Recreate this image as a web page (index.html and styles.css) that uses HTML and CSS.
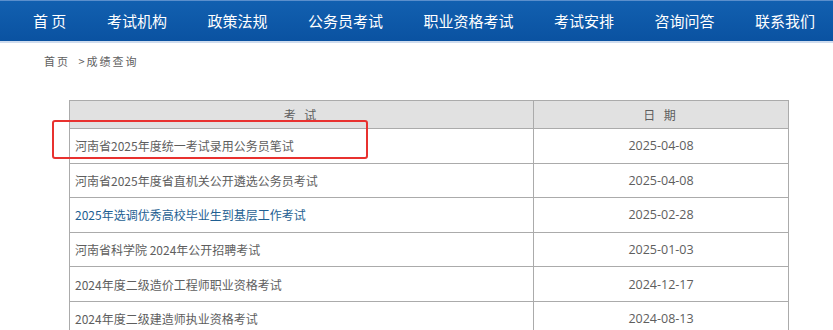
FILE: index.html
```html
<!DOCTYPE html>
<html lang="zh-CN">
<head>
    <meta charset="UTF-8">
    <meta name="viewport" content="width=device-width, initial-scale=1.0">
    <title>成绩查询</title>
    <link rel="stylesheet" href="styles.css">
</head>
<body>
    <div class="nav-bar">
        <ul class="nav-menu">
            <li><a href="#" class="nav-link">首 页</a></li>
            <li><a href="#" class="nav-link">考试机构</a></li>
            <li><a href="#" class="nav-link">政策法规</a></li>
            <li><a href="#" class="nav-link">公务员考试</a></li>
            <li><a href="#" class="nav-link">职业资格考试</a></li>
            <li><a href="#" class="nav-link">考试安排</a></li>
            <li><a href="#" class="nav-link">咨询问答</a></li>
            <li><a href="#" class="nav-link">联系我们</a></li>
        </ul>
    </div>

    <div class="breadcrumb">
        <a href="#">首页</a> &gt;成绩查询
    </div>

    <div class="list-wrap">
        <table class="exam-table">
            <thead>
                <tr>
                    <th class="col-name">考 试</th>
                    <th class="col-date">日 期</th>
                </tr>
            </thead>
            <tbody>
                <tr>
                    <td class="col-name">河南省2025年度统一考试录用公务员笔试</td>
                    <td class="col-date">2025-04-08</td>
                </tr>
                <tr>
                    <td class="col-name">河南省2025年度省直机关公开遴选公务员考试</td>
                    <td class="col-date">2025-04-08</td>
                </tr>
                <tr>
                    <td class="col-name"><a href="#" class="exam-link">2025年选调优秀高校毕业生到基层工作考试</a></td>
                    <td class="col-date">2025-02-28</td>
                </tr>
                <tr>
                    <td class="col-name">河南省科学院 2024年公开招聘考试</td>
                    <td class="col-date">2025-01-03</td>
                </tr>
                <tr>
                    <td class="col-name">2024年度二级造价工程师职业资格考试</td>
                    <td class="col-date">2024-12-17</td>
                </tr>
                <tr>
                    <td class="col-name">2024年度二级建造师执业资格考试</td>
                    <td class="col-date">2024-08-13</td>
                </tr>
            </tbody>
        </table>
        <div class="highlight-box"></div>
    </div>
</body>
</html>
```

FILE: styles.css
```css
* {
    margin: 0;
    padding: 0;
    box-sizing: border-box;
}

body {
    background: #fff;
    font-family: "Open Sans", "Noto Sans CJK SC", sans-serif;
    color: #5e5e5e;
}

a {
    text-decoration: none;
    color: inherit;
}

.nav-bar {
    height: 43px;
    background: linear-gradient(#1260b0, #0a52a1);
    border-top: 1px solid #5b8fcc;
    border-bottom: 2px solid #cfdcee;
}

.nav-menu {
    list-style: none;
    display: flex;
    justify-content: space-between;
    align-items: center;
    height: 40px;
    padding: 0 18px 0 33px;
}

.nav-link {
    color: #fff;
    font-family: "Noto Sans CJK SC", sans-serif;
    font-size: 15px;
    line-height: 40px;
}

.breadcrumb {
    padding: 10px 0 0 44px;
    height: 57px;
    font-family: "Noto Sans CJK SC", sans-serif;
    font-size: 11px;
    letter-spacing: 2px;
    color: #5e5e5e;
    line-height: 16px;
}

.breadcrumb a {
    margin-right: 4px;
}

.list-wrap {
    position: relative;
    margin-left: 69px;
    width: 720px;
}

.exam-table {
    width: 720px;
    border-collapse: collapse;
    font-size: 12px;
    border: 1px solid #ababab;
}

.exam-table th {
    height: 28px;
    background: #e1e1e1;
    font-weight: normal;
    font-family: "Noto Sans CJK SC", sans-serif;
    color: #5e5e5e;
    letter-spacing: 3px;
    border: 1px solid #ababab;
}

.exam-table td {
    height: 34.6px;
    border: 1px solid #ababab;
}

.exam-table .col-name {
    width: 464px;
}

.exam-table td.col-name {
    padding-left: 5px;
    text-align: left;
    font-family: "Noto Sans CJK SC", sans-serif;
}

.exam-table td.col-date {
    text-align: center;
    font-size: 12.5px;
}

.exam-link {
    color: #1e5f92;
}

/* red annotation frame over the first row */
.highlight-box {
    position: absolute;
    left: -17px;
    top: 20px;
    width: 316px;
    height: 39px;
    border: 2px solid #e8312f;
    border-radius: 3px;
}
```
